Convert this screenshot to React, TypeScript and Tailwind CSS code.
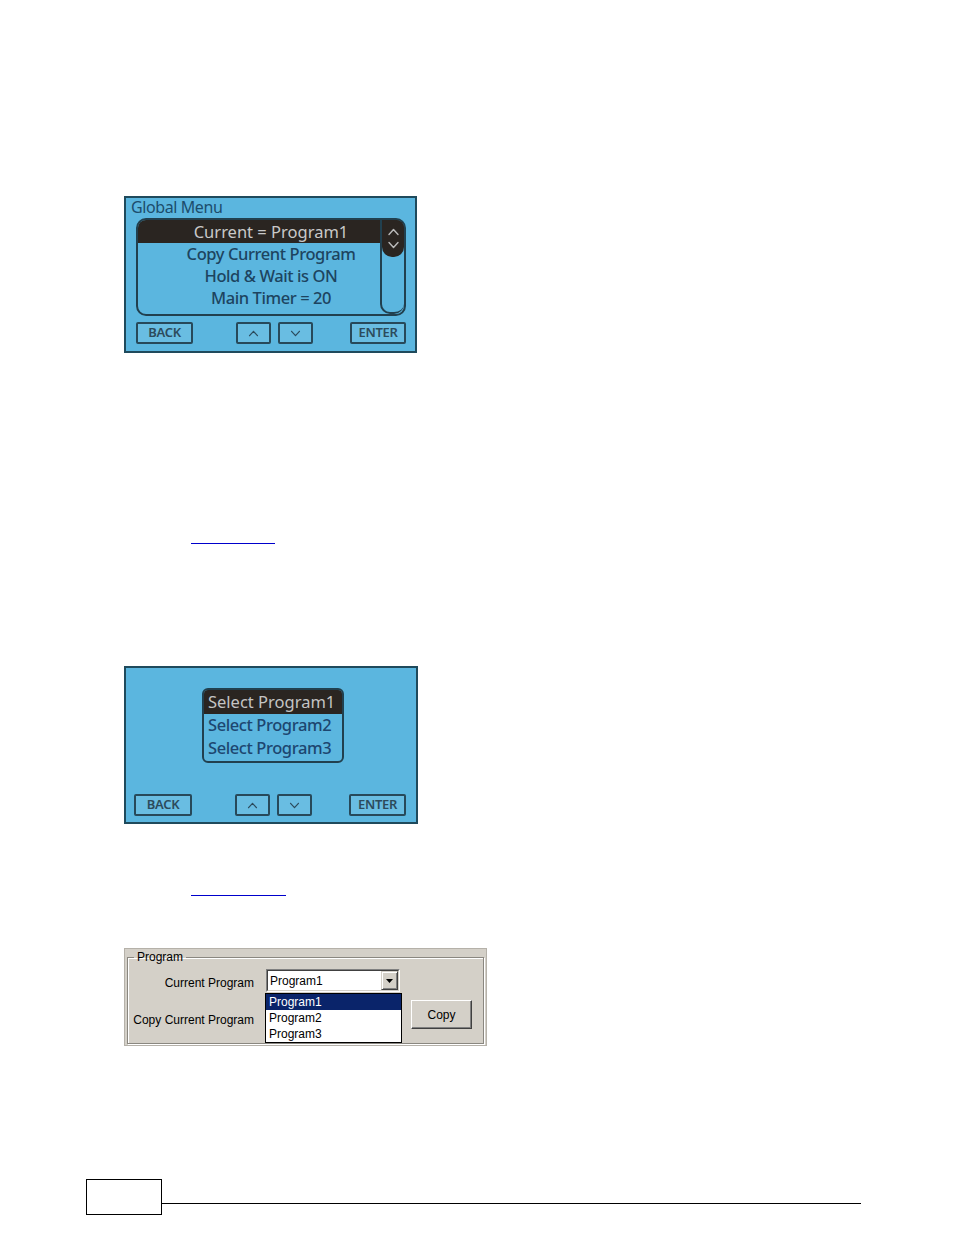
import React from "react";

const lcdFont = { fontFamily: '"Noto Sans", "Open Sans", sans-serif' };
const winFont = { fontFamily: '"Liberation Sans", Arial, sans-serif' };

const Chevron = ({ up, className }: { up: boolean; className?: string }) => (
  <svg viewBox="0 0 12 8" className={className} fill="none" strokeLinecap="round" strokeLinejoin="round">
    <path d={up ? "M1.5 6.5 L6 1.5 L10.5 6.5" : "M1.5 1.5 L6 6.5 L10.5 1.5"} strokeWidth="1.4" stroke="currentColor" />
  </svg>
);

const LcdButton = ({ children, className }: { children: React.ReactNode; className?: string }) => (
  <div
    className={`h-[22px] border-2 border-[#27495a] rounded-[2px] bg-[#69bde2] flex items-center justify-center text-[13px] font-semibold tracking-tight text-[#2c4b5c] ${className ?? ""}`}
  >
    {children}
  </div>
);

const ButtonRow = ({ second }: { second?: boolean }) => (
  <div className="flex items-center">
    <LcdButton className={second ? "ml-[8px] w-[58px]" : "ml-[10px] w-[57px]"}>BACK</LcdButton>
    <LcdButton className="ml-[43px] w-[35px]">
      <Chevron up className="w-[11px] h-[7px] text-[#2c4b5c]" />
    </LcdButton>
    <LcdButton className="ml-[7px] w-[35px]">
      <Chevron up={false} className="w-[11px] h-[7px] text-[#2c4b5c]" />
    </LcdButton>
    <LcdButton className={second ? "ml-[37px] w-[57px]" : "ml-[37px] w-[56px]"}>ENTER</LcdButton>
  </div>
);

const GlobalMenuLcd = () => (
  <div className="ml-[124px] mt-[196px] w-[293px] h-[157px] border-2 border-[#1f4a5c] bg-[#5bb6df]" style={lcdFont}>
    <div className="h-[20px] leading-[18px] pl-[5px] text-[16px] text-[#1c4d6c] tracking-tight">Global Menu</div>
    <div className="relative ml-[10px] w-[270px] h-[98px] border-2 border-[#21404f] rounded-[10px] overflow-hidden">
      <div className="h-[23px] bg-[#2a2521] text-[#c9c9c9] text-[16.5px] leading-[23px] text-center">
        Current = Program1
      </div>
      {["Copy Current Program", "Hold & Wait is ON", "Main Timer = 20"].map((t) => (
        <div key={t} className="h-[22px] text-[#1d4460] text-[16.5px] font-medium leading-[22px] text-center tracking-tight">
          {t}
        </div>
      ))}
      <div className="absolute right-0 top-0 bottom-0 w-[24px] border-l-2 border-b-2 border-[#21404f] rounded-b-[10px] flex flex-col">
        <div className="h-[37px] bg-[#2a2521] rounded-b-[10px] flex flex-col items-center justify-center gap-[5px]">
          <Chevron up className="w-[13px] h-[8px] text-[#b9b9b9]" />
          <Chevron up={false} className="w-[13px] h-[8px] text-[#b9b9b9]" />
        </div>
      </div>
    </div>
    <div className="mt-[6px]">
      <ButtonRow />
    </div>
  </div>
);

const SelectProgramLcd = () => (
  <div className="ml-[124px] mt-[122px] w-[294px] h-[158px] border-2 border-[#1f4a5c] bg-[#5bb6df]" style={lcdFont}>
    <div className="ml-[76px] mt-[20px] w-[142px] h-[75px] border-2 border-[#21404f] rounded-[6px] overflow-hidden">
      <div className="h-[24px] bg-[#2a2521] text-[#c4c4c4] text-[16.5px] leading-[24px] pl-[4px]">
        Select Program1
      </div>
      {["Select Program2", "Select Program3"].map((t) => (
        <div key={t} className="h-[23px] text-[#1d4670] text-[16.5px] font-medium leading-[22px] pl-[4px] tracking-tight">
          {t}
        </div>
      ))}
    </div>
    <div className="mt-[31px]">
      <ButtonRow second />
    </div>
  </div>
);

const ProgramPanel = () => (
  <div
    className="ml-[124px] mt-[52px] w-[363px] h-[98px] bg-[#d4d0c8] border border-[#b5b1a9] px-[2px] pt-[1px] text-[12px] text-black"
    style={winFont}
  >
    <fieldset className="h-[94px] border border-[#8a8780] shadow-[inset_1px_1px_0_#ffffff,1px_1px_0_#ffffff] px-0">
      <legend className="ml-[6px] px-[3px] leading-[14px]">Program</legend>
      <div className="flex items-center mt-[5px] h-[23px]">
        <div className="w-[126px] text-right pt-[4px]">Current Program</div>
        <div className="relative ml-[12px] w-[134px] h-[23px] bg-white border border-t-[#808080] border-l-[#808080] border-b-white border-r-white">
          <div className="h-full border border-t-[#404040] border-l-[#404040] border-b-[#d4d0c8] border-r-[#d4d0c8] flex items-center">
            <span className="pl-[2px] flex-1">Program1</span>
            <div className="w-[17px] h-[19px] bg-[#d4d0c8] border border-t-[#d4d0c8] border-l-[#d4d0c8] border-b-[#404040] border-r-[#404040] shadow-[inset_1px_1px_0_#ffffff,inset_-1px_-1px_0_#808080] flex items-center justify-center">
              <svg viewBox="0 0 7 4" className="w-[7px] h-[4px]">
                <path d="M0 0 H7 L3.5 4 Z" fill="#000" />
              </svg>
            </div>
          </div>
          <div className="absolute left-[-2px] top-[23px] w-[137px] border border-black bg-white z-10">
            <div className="h-[16px] leading-[16px] pl-[3px] bg-[#0a246a] text-white">Program1</div>
            <div className="h-[16px] leading-[16px] pl-[3px]">Program2</div>
            <div className="h-[16px] leading-[16px] pl-[3px]">Program3</div>
          </div>
        </div>
      </div>
      <div className="flex items-start mt-[8px]">
        <div className="w-[126px] text-right pt-[13px] leading-[14px]">Copy Current Program</div>
        <div className="ml-[12px] w-[134px]" />
        <div className="ml-[11px] w-[61px] h-[29px] bg-[#d4d0c8] border border-t-white border-l-white border-b-[#404040] border-r-[#404040] shadow-[inset_-1px_-1px_0_#808080] flex items-center justify-center">
          Copy
        </div>
      </div>
    </fieldset>
  </div>
);

export default function App() {
  return (
    <div className="w-[954px] h-[1235px] bg-white flex flex-col overflow-hidden">
      <GlobalMenuLcd />
      <div className="ml-[191px] mt-[190px] w-[84px] h-px bg-[#0000cc]" />
      <SelectProgramLcd />
      <div className="ml-[191px] mt-[71px] w-[95px] h-px bg-[#0000cc]" />
      <ProgramPanel />
      <div className="ml-[86px] mt-[133px] flex items-start">
        <div className="w-[76px] h-[36px] border border-black" />
        <div className="mt-[24px] w-[699px] h-px bg-black" />
      </div>
    </div>
  );
}
